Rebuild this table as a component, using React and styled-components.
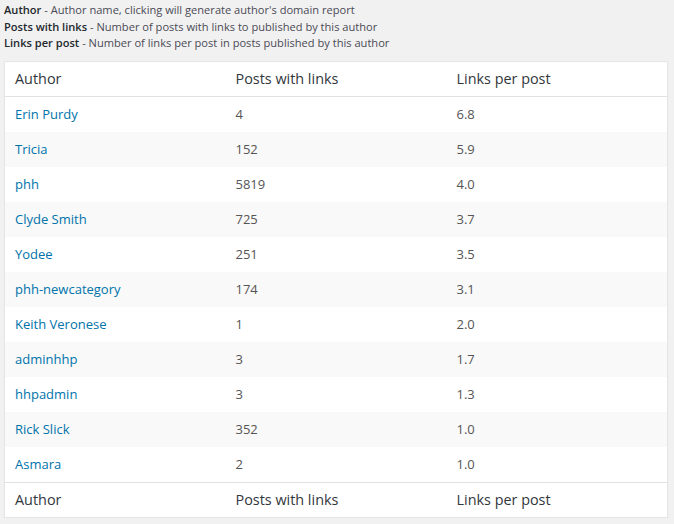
import React from 'react';
import styled, { createGlobalStyle } from 'styled-components';

const GlobalStyle = createGlobalStyle`
  html, body {
    margin: 0;
    background: #f1f1f1;
  }
  body {
    font-family: "Open Sans", "Liberation Sans", sans-serif;
    font-size: 13px;
    color: #444;
  }
`;

const Wrap = styled.div`
  padding: 2px 6px 0 4px;
`;

const Legend = styled.p`
  margin: 0 0 9px;
  font-size: 11.1px;
  line-height: 16.7px;
  color: #4a4a55;
`;

const Term = styled.strong`
  font-weight: 600;
  color: #23282d;
`;

const Table = styled.table`
  width: 100%;
  table-layout: fixed;
  border-collapse: collapse;
  border-spacing: 0;
  background: #fff;
  border: 1px solid #e5e5e5;
  box-shadow: 0 1px 1px rgba(0, 0, 0, 0.04);
`;

const HeadCell = styled.th`
  text-align: left;
  font-weight: 400;
  font-size: 14.4px;
  line-height: 18px;
  padding: 8px 10px;
  color: #32373c;
  border-bottom: ${p => (p.$foot ? 'none' : '1px solid #e1e1e1')};
  border-top: ${p => (p.$foot ? '1px solid #e1e1e1' : 'none')};
`;

const Row = styled.tr`
  background: ${p => (p.$alt ? '#f9f9f9' : '#fff')};
`;

const Cell = styled.td`
  padding: 8px 10px;
  line-height: 19px;
  font-size: 13px;
  color: #555;
`;

const AuthorLink = styled.a`
  color: #0073aa;
  text-decoration: none;
`;

const rows = [
  ['Erin Purdy', '4', '6.8'],
  ['Tricia', '152', '5.9'],
  ['phh', '5819', '4.0'],
  ['Clyde Smith', '725', '3.7'],
  ['Yodee', '251', '3.5'],
  ['phh-newcategory', '174', '3.1'],
  ['Keith Veronese', '1', '2.0'],
  ['adminhhp', '3', '1.7'],
  ['hhpadmin', '3', '1.3'],
  ['Rick Slick', '352', '1.0'],
  ['Asmara', '2', '1.0'],
];

const columns = ['Author', 'Posts with links', 'Links per post'];

export default function App() {
  return (
    <Wrap>
      <GlobalStyle />
      <Legend>
        <Term>Author</Term> - Author name, clicking will generate author's domain report
        <br />
        <Term>Posts with links</Term> - Number of posts with links to published by this author
        <br />
        <Term>Links per post</Term> - Number of links per post in posts published by this author
      </Legend>
      <Table>
        <thead>
          <tr>
            {columns.map(c => <HeadCell key={c}>{c}</HeadCell>)}
          </tr>
        </thead>
        <tbody>
          {rows.map(([name, posts, links], i) => (
            <Row key={name} $alt={i % 2 === 1}>
              <Cell><AuthorLink href="#">{name}</AuthorLink></Cell>
              <Cell>{posts}</Cell>
              <Cell>{links}</Cell>
            </Row>
          ))}
        </tbody>
        <tfoot>
          <tr>
            {columns.map(c => <HeadCell key={c} $foot>{c}</HeadCell>)}
          </tr>
        </tfoot>
      </Table>
    </Wrap>
  );
}
